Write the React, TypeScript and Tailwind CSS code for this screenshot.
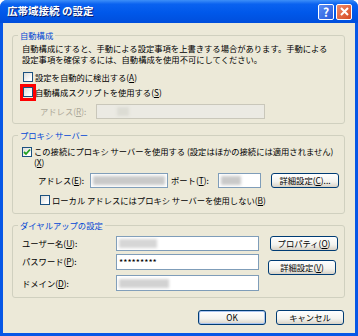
import type { ReactNode } from 'react'
import clsx from 'clsx'

// Boîte de dialogue XP « 広帯域接続 の設定 »

const jp = "font-['Noto_Sans_CJK_JP',sans-serif]"

function Checkbox({ checked = false }: { checked?: boolean }) {
  return (
    <span className="w-[10px] h-[10px] shrink-0 border border-[#1C5180] bg-[linear-gradient(135deg,#DCDCD7,#FFFFFF_80%)] flex items-center justify-center">
      {checked && (
        <svg width="8" height="8" viewBox="0 0 8 8">
          <path d="M1 4 L3 6 L7 1.5" fill="none" stroke="#21A121" strokeWidth="1.8" />
        </svg>
      )}
    </span>
  )
}

function XpButton({ children, className, def }: { children: ReactNode; className?: string; def?: boolean }) {
  return (
    <div
      className={clsx(
        'h-[15px] shrink-0 rounded-[3px] border border-[#003C74] bg-[linear-gradient(to_bottom,#FFFFFF,#F3F3EE_60%,#D8D2C6)] flex items-center justify-center text-[8.3px] leading-none text-black',
        def && 'shadow-[inset_0_0_0_1px_#A9C4F0]',
        className,
      )}
    >
      {children}
    </div>
  )
}

// Petites zones floutées (données masquées dans la capture)
function Blur({ className }: { className: string }) {
  return <div className={clsx('h-[9px] bg-[#c9c9c9] blur-[1.5px]', className)} />
}

function Group({ title, children, className }: { title: string; children: ReactNode; className?: string }) {
  return (
    <fieldset className={clsx('ml-[9px] w-[333px] border border-[#D0D0BF] rounded-[3px]', className)}>
      <legend className="ml-[5px] px-[2px] text-[8.3px] leading-[11px] text-[#0046D5]">{title}</legend>
      {children}
    </fieldset>
  )
}

export default function App() {
  return (
    <div className={clsx('w-[358px] h-[336px] flex flex-col bg-[#0757E6] rounded-t-[7px] overflow-hidden', jp)}>
      {/* Barre de titre */}
      <div className="h-[23px] shrink-0 flex items-center bg-[linear-gradient(to_bottom,#3D8FF8,#0A62F0_18%,#0058EA_55%,#004EDC)] pl-[7px] pr-[6px]">
        <span className="text-white font-bold text-[10.5px] leading-none [text-shadow:1px_1px_0_#0A1E6E]">
          広帯域接続 の設定
        </span>
        <div className="ml-auto flex gap-[2px]">
          <div className="w-[16px] h-[16px] rounded-[2px] border border-white bg-[linear-gradient(135deg,#5B8EF5,#2357DA)] flex items-center justify-center text-white font-bold text-[12px] leading-none">
            ?
          </div>
          <div className="w-[16px] h-[16px] rounded-[2px] border border-white bg-[linear-gradient(135deg,#EE8A6B,#D64A22)] flex items-center justify-center">
            <svg width="9" height="9" viewBox="0 0 9 9">
              <path d="M1 1 L8 8 M8 1 L1 8" stroke="white" strokeWidth="2" />
            </svg>
          </div>
        </div>
      </div>

      {/* Corps */}
      <div className="flex-1 mx-[3px] mb-[3px] bg-[#ECE9D8] text-[8.3px] leading-[11px] text-black flex flex-col">
        {/* 自動構成 */}
        <Group title="自動構成" className="mt-[7px]">
          <div className="pl-[9px] pt-[2px] pb-[4px]">
            <p className="whitespace-nowrap">
              自動構成にすると、手動による設定事項を上書きする場合があります。手動による
              <br />
              設定事項を確保するには、自動構成を使用不可にしてください。
            </p>
            <div className="mt-[5px] h-[14px] flex items-center gap-[2px] pl-[1px]">
              <Checkbox />
              <span>設定を自動的に検出する(<u>A</u>)</span>
            </div>
            <div className="mt-[1px] h-[14px] flex items-center gap-[2px] pl-[1px]">
              <span className="relative">
                <Checkbox />
                <span className="absolute left-[-3px] top-[-3px] w-[16px] h-[17px] border-[3px] border-[#FF0000]" />
              </span>
              <span>自動構成スクリプトを使用する(<u>S</u>)</span>
            </div>
            <div className="mt-[4px] h-[16px] flex items-center">
              <span className="ml-[18px] w-[56px] text-[#ACA899]">アドレス(<u>R</u>):</span>
              <div className="w-[169px] h-[15px] border border-[#C9C7BA] bg-[#EBEAE3] flex items-center">
                <Blur className="ml-[20px] w-[12px] h-[5px] bg-[#dcdcd4]" />
              </div>
            </div>
          </div>
        </Group>

        {/* プロキシ サーバー */}
        <Group title="プロキシ サーバー" className="mt-[6px]">
          <div className="pl-[9px] pt-[5px] pb-[7px]">
            <div className="flex items-start gap-[2px]">
              <span className="mt-[1px]">
                <Checkbox checked />
              </span>
              <span className="whitespace-nowrap">
                この接続にプロキシ サーバーを使用する (設定はほかの接続には適用されません)
                <br />
                (<u>X</u>)
              </span>
            </div>
            <div className="mt-[4px] h-[16px] flex items-center">
              <span className="ml-[16px] w-[52px]">アドレス(<u>E</u>):</span>
              <div className="w-[78px] h-[15px] border border-[#7F9DB9] bg-white flex items-center">
                <Blur className="ml-[2px] w-[72px]" />
              </div>
              <span className="ml-[3px] w-[47px]">ポート(<u>T</u>):</span>
              <div className="w-[43px] h-[15px] border border-[#7F9DB9] bg-white flex items-center">
                <Blur className="ml-[2px] w-[20px]" />
              </div>
              <XpButton className="ml-[10px] w-[68px]">詳細設定(<u>C</u>)...</XpButton>
            </div>
            <div className="mt-[6px] h-[12px] flex items-center gap-[2px] pl-[18px]">
              <Checkbox />
              <span>ローカル アドレスにはプロキシ サーバーを使用しない(<u>B</u>)</span>
            </div>
          </div>
        </Group>

        {/* ダイヤルアップの設定 */}
        <Group title="ダイヤルアップの設定" className="mt-[6px]">
          <div className="pl-[9px] pt-[5px] pb-[6px]">
            <div className="flex items-center">
              <span className="w-[94px]">ユーザー名(<u>U</u>):</span>
              <div className="w-[143px] h-[15px] border border-[#7F9DB9] bg-white flex items-center">
                <Blur className="ml-[2px] w-[38px] bg-[#d6d6d6]" />
              </div>
              <XpButton className="ml-[11px] w-[68px]">プロパティ(<u>O</u>)</XpButton>
            </div>
            <div className="mt-[3px] flex items-start">
              <span className="w-[94px] mt-[2px]">パスワード(<u>P</u>):</span>
              <div className="w-[143px] h-[16px] border border-[#7F9DB9] bg-white flex items-center pl-[2px] text-[9px] leading-none">
                *********
              </div>
              <XpButton className="ml-[9px] mt-[6px] w-[68px]">詳細設定(<u>V</u>)</XpButton>
            </div>
            <div className="flex items-center">
              <span className="w-[94px]">ドメイン(<u>D</u>):</span>
              <div className="w-[143px] h-[16px] border border-[#7F9DB9] bg-white flex items-center">
                <Blur className="ml-[2px] w-[50px] bg-[#d2d2d2]" />
              </div>
            </div>
          </div>
        </Group>

        {/* Boutons OK / キャンセル */}
        <div className="mt-[12px] flex justify-end gap-[10px] pr-[11px]">
          <XpButton def className="w-[68px]">OK</XpButton>
          <XpButton className="w-[68px]">キャンセル</XpButton>
        </div>
      </div>
    </div>
  )
}
